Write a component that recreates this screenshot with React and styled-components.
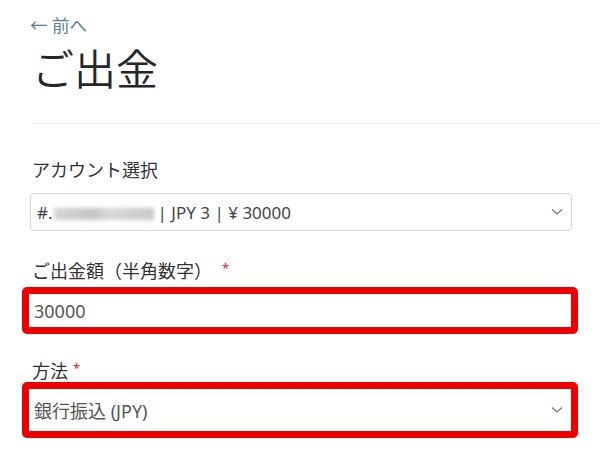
import React from "react";
import styled, { createGlobalStyle } from "styled-components";

const GlobalStyle = createGlobalStyle`
  html, body {
    margin: 0;
    padding: 0;
    background: #fff;
  }
  body {
    font-family: "Noto Sans", "Noto Sans CJK JP", sans-serif;
    color: #333;
  }
`;

const Page = styled.div`
  padding: 15px 28px 0 30px;
  display: flex;
  flex-direction: column;
`;

const BackLink = styled.a`
  font-size: 17.5px;
  line-height: 21px;
  color: #5a7f92;
  text-decoration: none;
  align-self: flex-start;
`;

const Title = styled.h1`
  margin: 6px 0 0 2px;
  font-family: "Noto Sans CJK JP", sans-serif;
  font-size: 42px;
  line-height: 49px;
  font-weight: 350;
  color: #262626;
`;

const Divider = styled.hr`
  margin: 32px 0 0 2px;
  border: none;
  border-top: 1px solid #ececec;
  width: calc(100% + 28px);
`;

const Label = styled.label`
  display: block;
  margin: ${(p) => p.$top}px 0 0 2px;
  font-size: 18px;
  line-height: 20px;
  color: #333;
`;

const Required = styled.span`
  color: #d9202a;
  font-size: 13px;
  vertical-align: top;
  margin-left: ${(p) => p.$gap || 5}px;
  position: relative;
  top: -3px;
`;

const Select = styled.div`
  margin-top: ${(p) => p.$top}px;
  height: 38px;
  box-sizing: border-box;
  border: 1px solid #d6d6d6;
  border-radius: 4px;
  display: flex;
  align-items: center;
  padding: 0 8px 0 6px;
  font-size: 17px;
  color: #444;
`;

const Highlight = styled.div`
  margin: ${(p) => p.$top}px -6px 0 -8px;
  border: 7px solid #ee0000;
  border-radius: 5px;
  height: ${(p) => p.$h}px;
  display: flex;
  align-items: center;
  padding: 0 8px 0 5px;
  font-size: 18px;
  color: #555;
  background: #fff;
`;

const Value = styled.span`
  flex: 1;
  white-space: nowrap;
`;

const Masked = styled.span`
  display: inline-block;
  width: 100px;
  height: 12px;
  margin: 0 4px 0 1px;
  vertical-align: middle;
  background: linear-gradient(90deg, #d4d4d4, #c4c4c4 40%, #d8d8d8 55%, #c6c6c6);
  filter: blur(2px);
`;

const Chevron = () => (
  <svg width="12" height="8" viewBox="0 0 12 8">
    <path d="M1 1.5 L6 6 L11 1.5" fill="none" stroke="#777" strokeWidth="1.3" />
  </svg>
);

export default function App() {
  return (
    <>
      <GlobalStyle />
      <Page>
        <BackLink href="#">← 前へ</BackLink>
        <Title>ご出金</Title>
        <Divider />

        <Label $top={36}>アカウント選択</Label>
        <Select $top={13}>
          <Value>
            #.<Masked />| JPY 3 | ¥ 30000
          </Value>
          <Chevron />
        </Select>

        <Label $top={30}>
          ご出金額（半角数字）<Required $gap={10}>*</Required>
        </Label>
        <Highlight $top={6} $h={33}>
          <Value>30000</Value>
        </Highlight>

        <Label $top={27}>
          方法<Required>*</Required>
        </Label>
        <Highlight $top={1} $h={42}>
          <Value>銀行振込 (JPY)</Value>
          <Chevron />
        </Highlight>
      </Page>
    </>
  );
}
